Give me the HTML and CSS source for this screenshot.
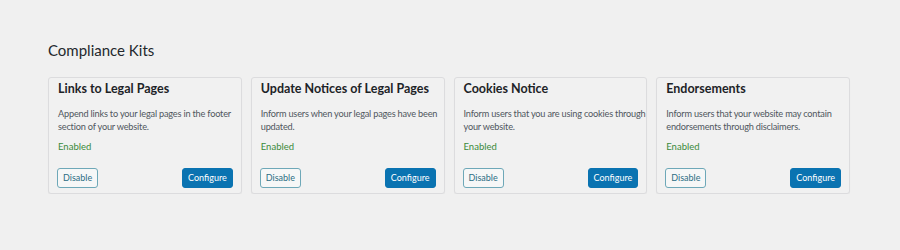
FILE: index.html
```html
<!DOCTYPE html>
<html lang="en">
<head>
    <meta charset="UTF-8">
    <title>Compliance Kits</title>
    <link rel="stylesheet" href="styles.css">
</head>
<body>
    <div class="wrap">
        <h2 class="page-title">Compliance Kits</h2>

        <div class="kits">
            <div class="kit">
                <div class="kit-title">Links to Legal Pages</div>
                <p class="kit-desc">Append links to your legal pages in the footer section of your website.</p>
                <div class="kit-status">Enabled</div>
                <div class="kit-actions">
                    <button class="btn btn-outline">Disable</button>
                    <button class="btn btn-primary">Configure</button>
                </div>
            </div>

            <div class="kit">
                <div class="kit-title">Update Notices of Legal Pages</div>
                <p class="kit-desc">Inform users when your legal pages have been updated.</p>
                <div class="kit-status">Enabled</div>
                <div class="kit-actions">
                    <button class="btn btn-outline">Disable</button>
                    <button class="btn btn-primary">Configure</button>
                </div>
            </div>

            <div class="kit">
                <div class="kit-title">Cookies Notice</div>
                <p class="kit-desc">Inform users that you are using cookies through your website.</p>
                <div class="kit-status">Enabled</div>
                <div class="kit-actions">
                    <button class="btn btn-outline">Disable</button>
                    <button class="btn btn-primary">Configure</button>
                </div>
            </div>

            <div class="kit">
                <div class="kit-title">Endorsements</div>
                <p class="kit-desc">Inform users that your website may contain endorsements through disclaimers.</p>
                <div class="kit-status">Enabled</div>
                <div class="kit-actions">
                    <button class="btn btn-outline">Disable</button>
                    <button class="btn btn-primary">Configure</button>
                </div>
            </div>
        </div>
    </div>
</body>
</html>
```

FILE: styles.css
```css
* {
    margin: 0;
    padding: 0;
    box-sizing: border-box;
}

body {
    background: #f0f0f0;
    font-family: 'Lato', 'Open Sans', sans-serif;
    color: #1d2327;
}

.wrap {
    padding: 40px 0 0 48px;
}

/* Heading */
.page-title {
    font-size: 15px;
    font-weight: 400;
    color: #23282d;
    line-height: 20px;
    margin-bottom: 17px;
}

/* Kit cards */
.kits {
    display: grid;
    grid-template-columns: repeat(4, 1fr);
    gap: 9px;
    width: 802px;
}

.kit {
    display: flex;
    flex-direction: column;
    height: 117px;
    padding: 2px 1px 5px 8px;
    background: #f1f1f1;
    border: 1px solid #dcdcde;
    border-radius: 3px;
    box-shadow: 0 1px 1px rgba(0, 0, 0, 0.04);
}

.kit-title {
    font-size: 12.5px;
    font-weight: 700;
    line-height: 18px;
    color: #1d2327;
    padding-left: 1px;
}

.kit-desc {
    font-size: 9.2px;
    line-height: 13px;
    letter-spacing: -0.2px;
    color: #50575e;
    margin: 9px -4px 0 0;
    padding-left: 1px;
}

.kit-status {
    font-size: 9.5px;
    line-height: 13px;
    color: #3a8a3a;
    margin-top: 7px;
    padding-left: 1px;
}

.kit-actions {
    margin-top: auto;
    margin-right: 7px;
    display: flex;
    justify-content: space-between;
    align-items: center;
}

/* Buttons */
.btn {
    font-family: 'Lato', 'Open Sans', sans-serif;
    font-size: 9px;
    height: 20px;
    line-height: 18px;
    padding: 0 5px;
    border-radius: 3px;
    cursor: pointer;
}

.btn-outline {
    background: #f6f7f7;
    color: #2c6e84;
    border: 1px solid #6ea8b8;
}

.btn-primary {
    background: #0a73b1;
    color: #fff;
    border: 1px solid #0a73b1;
    padding: 0 5px;
}
```
